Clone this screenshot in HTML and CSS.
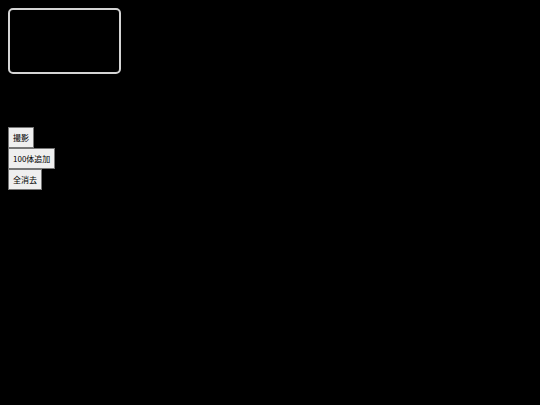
FILE: index.html
```html
<!DOCTYPE html>
<html>
<head>
<meta charset="utf-8">
<link rel="stylesheet" href="styles.css">
</head>
<body>
<div class="frame"></div>
<div class="controls">
  <button class="btn">撮影</button>
  <button class="btn">100体追加</button>
  <button class="btn">全消去</button>
</div>
</body>
</html>
```
FILE: styles.css
```css
html, body {
  background: #000;
}
body {
  margin: 8px;
  font-family: "Noto Sans CJK JP", "Liberation Sans", sans-serif;
}
.frame {
  width: 109px;
  height: 62px;
  border: 2px solid #d4d4d4;
  border-radius: 5px;
}
.controls {
  margin-top: 53px;
  display: flex;
  flex-direction: column;
  align-items: flex-start;
}
.btn {
  font-family: "Noto Sans CJK JP", "Liberation Sans", sans-serif;
  font-size: 8px;
  height: 21px;
  padding: 0 4px;
  margin: 0;
  border: 1px solid #767676;
  background: #efefef;
  color: #000;
  border-radius: 0;
}
```
